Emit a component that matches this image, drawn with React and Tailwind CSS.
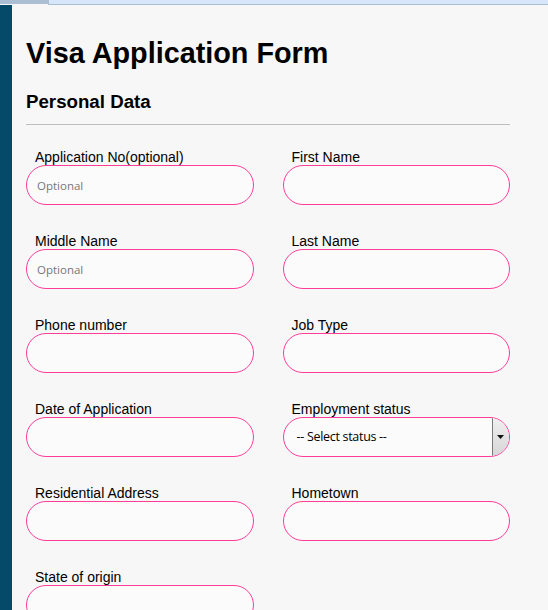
import React from "react";

const Field = ({ label, placeholder }) => (
  <div className="flex flex-col">
    <label className="h-[16px] pl-[9px] text-[14px] leading-[16px] text-black">{label}</label>
    <input
      placeholder={placeholder}
      className="h-[40px] w-full rounded-full border-[1.5px] border-[#ff3d9a] bg-[#fbfbfb] px-[10px] font-['Open_Sans',sans-serif] text-[11.5px] outline-none placeholder:text-[#777777]"
    />
  </div>
);

const SelectField = ({ label }) => (
  <div className="flex flex-col">
    <label className="h-[16px] pl-[9px] text-[14px] leading-[16px] text-black">{label}</label>
    <div className="flex h-[40px] w-full items-stretch overflow-hidden rounded-full border-[1.5px] border-[#ff3d9a] bg-[#fbfbfb]">
      <div className="flex flex-1 items-center pl-[13px] font-['Open_Sans',sans-serif] text-[12.5px] tracking-[-0.3px] text-black">
        -- Select status --
      </div>
      <div className="flex w-[17px] items-center justify-center border-l border-[#7a7a7a] bg-gradient-to-b from-[#f0f0f0] to-[#d6d6d6] pr-[1px]">
        <svg width="7" height="4" viewBox="0 0 7 4"><path d="M0 0h7L3.5 4z" fill="#111" /></svg>
      </div>
    </div>
  </div>
);

export default function App() {
  return (
    <div className="flex h-[610px] w-[548px] flex-col overflow-hidden bg-[#f7f7f7] font-['Liberation_Sans',Arial,sans-serif]">
      <div className="flex h-[5px] shrink-0">
        <div className="h-[4px] w-[48px] bg-[#abbed4]" />
        <div className="flex-1 border-b border-l border-[#a9bfd6] bg-[#d7e6f8]" />
      </div>
      <div className="flex flex-1">
        <div className="w-[12px] shrink-0 bg-[#054a68]" />
        <div className="w-[498px] pl-[14px]">
          <h1 className="mt-[31px] text-[28.8px] font-bold leading-[34px] text-black">Visa Application Form</h1>
          <h3 className="mt-[21px] text-[18.7px] font-bold leading-[22px] text-black">Personal Data</h3>
          <div className="mt-[11px] h-px bg-[#bdbdbd]" />
          <div className="mt-[24px] grid grid-cols-2 gap-x-[29px] gap-y-[28px]">
            <Field label="Application No(optional)" placeholder="Optional" />
            <Field label="First Name" />
            <Field label="Middle Name" placeholder="Optional" />
            <Field label="Last Name" />
            <Field label="Phone number" />
            <Field label="Job Type" />
            <Field label="Date of Application" />
            <SelectField label="Employment status" />
            <Field label="Residential Address" />
            <Field label="Hometown" />
            <Field label="State of origin" />
          </div>
        </div>
      </div>
    </div>
  );
}
